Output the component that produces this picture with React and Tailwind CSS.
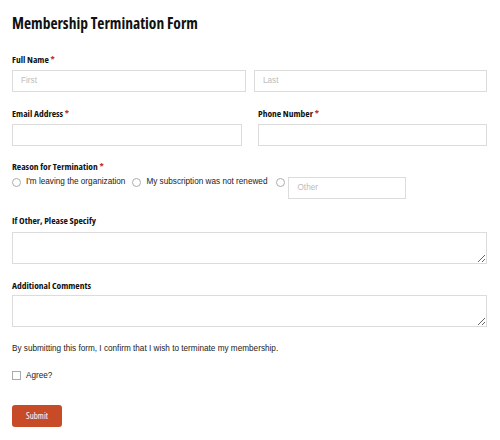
export default function App() {
  const head = { fontFamily: '"Open Sans", "DejaVu Sans Condensed", sans-serif', fontStretch: '75%' };
  const body = { fontFamily: '"Liberation Sans", Arial, sans-serif' };

  const Label = ({ children, req }) => (
    <label className="block h-[10px] text-[9.5px] font-bold text-[#111] leading-[10px]" style={head}>
      {children}
      {req && <span className="text-[#c0392b]"> *</span>}
    </label>
  );

  const input = 'h-[22px] border border-[#dcdcdc] bg-white px-2 text-[8.2px] text-[#333] placeholder-[#bbb] outline-none';

  return (
    <div className="w-[500px] h-[440px] bg-white px-3 pt-[16px] overflow-hidden" style={body}>
      <h1 className="text-[15.5px] font-bold text-[#111] leading-none" style={head}>Membership Termination Form</h1>

      <form className="mt-[23px]" onSubmit={(e) => e.preventDefault()}>
        <Label req>Full Name</Label>
        <div className="flex gap-2 mt-[5px] pr-[1px]">
          <input className={input + ' w-[234px]'} placeholder="First" />
          <input className={input + ' flex-1'} placeholder="Last" />
        </div>

        <div className="flex gap-4 mt-[17px] pr-[1px]">
          <div className="w-[230px]">
            <Label req>Email Address</Label>
            <input className={input + ' w-full mt-[5px]'} />
          </div>
          <div className="flex-1">
            <Label req>Phone Number</Label>
            <input className={input + ' w-full mt-[5px]'} />
          </div>
        </div>

        <div className="mt-[16px]">
          <Label req>Reason for Termination</Label>
          <div className="flex items-start mt-[5px] text-[8.2px] text-[#222]">
            <label className="flex items-center gap-[5px] h-[9px] mt-[1px]">
              <span className="w-[9px] h-[9px] rounded-full border border-[#aaa] inline-block" />
              I'm leaving the organization
            </label>
            <label className="flex items-center gap-[5px] ml-[7px] h-[9px] mt-[1px]">
              <span className="w-[9px] h-[9px] rounded-full border border-[#aaa] inline-block" />
              My subscription was not renewed
            </label>
            <span className="w-[9px] h-[9px] rounded-full border border-[#aaa] inline-block ml-[9px] mt-[1px]" />
            <input className={input + ' w-[118px] h-[21px] ml-[3px]'} placeholder="Other" />
          </div>
        </div>

        <div className="mt-[17px]">
          <Label>If Other, Please Specify</Label>
          <textarea className="block w-[475px] h-[32px] mt-[6px] border border-[#dcdcdc] outline-none resize-y" />
        </div>

        <div className="mt-[17px]">
          <Label>Additional Comments</Label>
          <textarea className="block w-[475px] h-[32px] mt-[4px] border border-[#dcdcdc] outline-none resize-y" />
        </div>

        <p className="mt-[17px] text-[8.2px] text-[#222] leading-[9px]">
          By submitting this form, I confirm that I wish to terminate my membership.
        </p>

        <label className="flex items-center gap-[5px] mt-[17px] text-[8.2px] text-[#222]">
          <span className="w-[9px] h-[9px] border border-[#aaa] inline-block" />
          Agree?
        </label>

        <button className="block mt-[23px] w-[50px] h-[22px] rounded-[3px] bg-[#c64b26] text-white text-[9px]" style={head}>
          Submit
        </button>
      </form>
    </div>
  );
}
